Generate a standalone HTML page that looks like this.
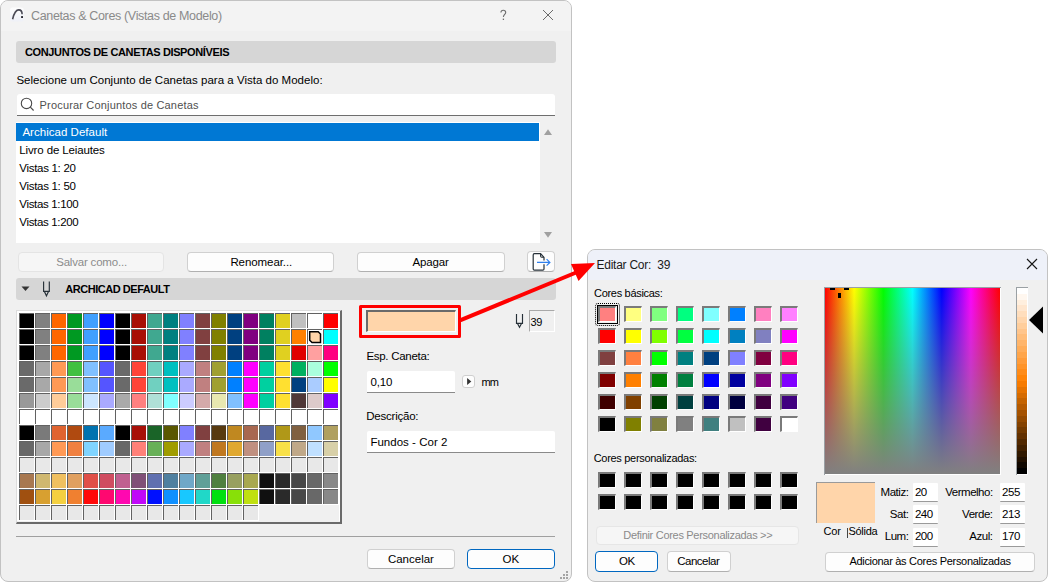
<!DOCTYPE html>
<html><head><meta charset="utf-8">
<style>
*{box-sizing:border-box;margin:0;padding:0}
html,body{width:1048px;height:582px;overflow:hidden;background:#fff}
body{position:relative;font-family:"Liberation Sans",sans-serif;font-size:12px;color:#000}
.a{position:absolute}
.t{position:absolute;white-space:pre}
.c{position:absolute;width:15px;height:15px;border-top:1px solid #626262;border-left:1px solid #626262}
.s{position:absolute;width:18px;height:16px;border-top:2px solid #7a7a7a;border-left:2px solid #7a7a7a;border-bottom:1px solid #fff;border-right:1px solid #fff}
</style></head><body>
<div class="a" style="left:0px;top:0px;width:572px;height:582px;background:#f0f0f0;border:1px solid #c2c2c2;border-radius:8px;"></div>
<div class="a" style="left:1px;top:1px;width:570px;height:30px;background:#f3f3f3;border-radius:7px 7px 0 0;"></div>
<svg class="a" style="left:0;top:0" width="40" height="30"><defs><linearGradient id="ig" x1="0" y1="0" x2="0" y2="1"><stop offset="0" stop-color="#fdfdfd"/><stop offset="1" stop-color="#eef0f7"/></linearGradient></defs><rect x="10" y="7.6" width="13.8" height="14" rx="2.5" fill="url(#ig)"/><path d="M12.6 19.2C13.6 15 15.8 9.9 18.8 9.9C20.9 9.9 22.1 11.6 22.1 14.3" fill="none" stroke="#4a4a55" stroke-width="1.6"/><rect x="21.1" y="16.1" width="1.9" height="1.9" fill="#2a2a30"/></svg>
<div class="t" style="left:31px;top:10.17px;font-size:12.5px;line-height:12.5px;font-weight:400;color:#8a8a8a;letter-spacing:-0.35px;">Canetas &amp; Cores (Vistas de Modelo)</div>
<svg class="a" style="left:0;top:0" width="580" height="30"><path d="M500.9 12.6C500.9 11 502 10.2 503.3 10.2C504.7 10.2 505.7 11.1 505.7 12.4C505.7 14.3 503.4 14.7 503.4 17" fill="none" stroke="#6f6f6f" stroke-width="1.1"/><rect x="502.75" y="18.6" width="1.3" height="1.4" fill="#6f6f6f"/></svg>
<svg class="a" style="left:542px;top:9px" width="12" height="12" viewBox="0 0 12 12"><path d="M1 1L11 11M11 1L1 11" stroke="#6a6a6a" stroke-width="1"/></svg>
<div class="a" style="left:16px;top:41px;width:540px;height:22px;background:#d6d6d6;border-radius:3px;"></div>
<div class="t" style="left:25px;top:46.56px;font-size:11px;line-height:11px;font-weight:700;color:#000;letter-spacing:-0.37px;">CONJUNTOS DE CANETAS DISPONÍVEIS</div>
<div class="t" style="left:16.4px;top:74.50px;font-size:11.5px;line-height:11.5px;font-weight:400;color:#000;letter-spacing:0.015px;">Selecione um Conjunto de Canetas para a Vista do Modelo:</div>
<div class="a" style="left:17px;top:94px;width:538px;height:22px;background:#fff;border-bottom:1px solid #6e6e6e;border-radius:3px 3px 0 0;"></div>
<svg class="a" style="left:0;top:90px" width="40" height="30"><circle cx="26.5" cy="13.4" r="5.2" fill="none" stroke="#4a4a4a" stroke-width="1.1"/><path d="M30.3 17.2L33.6 20.5" stroke="#4a4a4a" stroke-width="1.2"/></svg>
<div class="t" style="left:39.6px;top:99.76px;font-size:11px;line-height:11px;font-weight:400;color:#505050;letter-spacing:0.17px;">Procurar Conjuntos de Canetas</div>
<div class="a" style="left:16px;top:122px;width:524px;height:121px;background:#fff;"></div>
<div class="a" style="left:16px;top:123px;width:523px;height:18px;background:#0078d4;"></div>
<div class="t" style="left:22.4px;top:126.50px;font-size:11.5px;line-height:11.5px;font-weight:400;color:#fff;letter-spacing:0.03px;">Archicad Default</div>
<div class="t" style="left:19.3px;top:144.50px;font-size:11.5px;line-height:11.5px;font-weight:400;color:#000;letter-spacing:-0.13px;">Livro de Leiautes</div>
<div class="t" style="left:19.3px;top:162.50px;font-size:11.5px;line-height:11.5px;font-weight:400;color:#000;letter-spacing:-0.3px;">Vistas 1: 20</div>
<div class="t" style="left:19.3px;top:180.50px;font-size:11.5px;line-height:11.5px;font-weight:400;color:#000;letter-spacing:-0.3px;">Vistas 1: 50</div>
<div class="t" style="left:19.3px;top:198.50px;font-size:11.5px;line-height:11.5px;font-weight:400;color:#000;letter-spacing:-0.33px;">Vistas 1:100</div>
<div class="t" style="left:19.3px;top:216.50px;font-size:11.5px;line-height:11.5px;font-weight:400;color:#000;letter-spacing:-0.33px;">Vistas 1:200</div>
<svg class="a" style="left:544px;top:129px" width="8" height="6"><path d="M0 6L4 0.2L8 6Z" fill="#a0a0a0"/></svg>
<svg class="a" style="left:544px;top:232px" width="8" height="6"><path d="M0 0L8 0L4 5.8Z" fill="#a0a0a0"/></svg>
<div class="a" style="left:17.6px;top:252px;width:146.5px;height:20px;background:#f6f6f6;border:1px solid #e4e4e4;border-radius:4px;"></div>
<div class="t" style="left:56.2px;top:256.50px;font-size:11.5px;line-height:11.5px;font-weight:400;color:#8c8c8c;letter-spacing:-0.2px;">Salvar como...</div>
<div class="a" style="left:187.3px;top:252px;width:147.2px;height:20px;background:#fdfdfd;border:1px solid #d0d0d0;border-bottom-color:#b0b0b0;border-radius:4px;"></div>
<div class="t" style="left:230.4px;top:256.50px;font-size:11.5px;line-height:11.5px;font-weight:400;color:#000;letter-spacing:-0.08px;">Renomear...</div>
<div class="a" style="left:357px;top:252px;width:147.5px;height:20px;background:#fdfdfd;border:1px solid #d0d0d0;border-bottom-color:#b0b0b0;border-radius:4px;"></div>
<div class="t" style="left:412.4px;top:256.50px;font-size:11.5px;line-height:11.5px;font-weight:400;color:#000;letter-spacing:-0.12px;">Apagar</div>
<div class="a" style="left:527.4px;top:251.2px;width:27.2px;height:20.6px;background:#fdfdfd;border:1px solid #d0d0d0;border-bottom-color:#b0b0b0;border-radius:4px;"></div>
<svg class="a" style="left:0;top:0" width="1048" height="582"><path d="M544 260.6V257.3L540.6 253.7H534.4Q533.2 253.7 533.2 254.9V269Q533.2 270.1 534.4 270.1H542.8Q544 270.1 544 269V264.2" fill="none" stroke="#263038" stroke-width="1.2" stroke-linejoin="round"/><path d="M540.6 253.9V256.1Q540.6 257.2 541.7 257.2H543.9" fill="none" stroke="#263038" stroke-width="1.1"/><path d="M537 262.4H549.6M546.6 259.1L549.9 262.4L546.6 265.7" fill="none" stroke="#2f80ed" stroke-width="1.2"/></svg>
<div class="a" style="left:16px;top:278px;width:540px;height:22px;background:#d6d6d6;border-radius:3px;"></div>
<svg class="a" style="left:21px;top:286px" width="9" height="6"><path d="M0.5 0.5H8.5L4.5 5Z" fill="#333"/></svg>
<svg class="a" style="left:0;top:0" width="1048" height="582"><path d="M43.6 281.5V291.4H49.3V281.5M44.4 291.4L46.45 295.8L48.5 291.4" fill="none" stroke="#263038" stroke-width="1.15" stroke-linejoin="miter"/></svg>
<div class="t" style="left:65.3px;top:283.56px;font-size:11px;line-height:11px;font-weight:700;color:#000;letter-spacing:-0.47px;">ARCHICAD DEFAULT</div>
<div class="a" style="left:16px;top:310px;width:326px;height:214px;background:#f0f0f0;border-top:1px solid #dcdcdc;border-left:1px solid #dcdcdc;border-right:2px solid #6a6a6a;border-bottom:2px solid #6a6a6a;"></div>
<div class="a" style="left:17px;top:311px;width:323px;height:210px;background:#fff;"></div>
<div class="a" style="left:259px;top:505px;width:80px;height:16px;background:#f0f0f0;"></div>
<div class="c" style="left:19px;top:313px;background:#000000"></div><div class="c" style="left:35px;top:313px;background:#808080"></div><div class="c" style="left:51px;top:313px;background:#FF6600"></div><div class="c" style="left:67px;top:313px;background:#009922"></div><div class="c" style="left:83px;top:313px;background:#40A0FF"></div><div class="c" style="left:99px;top:313px;background:#0000FF"></div><div class="c" style="left:115px;top:313px;background:#000000"></div><div class="c" style="left:131px;top:313px;background:#A80E04"></div><div class="c" style="left:147px;top:313px;background:#40A890"></div><div class="c" style="left:163px;top:313px;background:#008080"></div><div class="c" style="left:179px;top:313px;background:#8080FF"></div><div class="c" style="left:195px;top:313px;background:#804040"></div><div class="c" style="left:211px;top:313px;background:#808000"></div><div class="c" style="left:227px;top:313px;background:#004080"></div><div class="c" style="left:243px;top:313px;background:#800080"></div><div class="c" style="left:259px;top:313px;background:#008060"></div><div class="c" style="left:275px;top:313px;background:#E0D020"></div><div class="c" style="left:291px;top:313px;background:#C0C0C0"></div><div class="c" style="left:307px;top:313px;background:#FFFFFF"></div><div class="c" style="left:323px;top:313px;background:#FF0000"></div><div class="c" style="left:19px;top:329px;background:#000000"></div><div class="c" style="left:35px;top:329px;background:#808080"></div><div class="c" style="left:51px;top:329px;background:#FF6600"></div><div class="c" style="left:67px;top:329px;background:#009922"></div><div class="c" style="left:83px;top:329px;background:#40A0FF"></div><div class="c" style="left:99px;top:329px;background:#0000FF"></div><div class="c" style="left:115px;top:329px;background:#000000"></div><div class="c" style="left:131px;top:329px;background:#A80E04"></div><div class="c" style="left:147px;top:329px;background:#40A890"></div><div class="c" style="left:163px;top:329px;background:#008080"></div><div class="c" style="left:179px;top:329px;background:#8080FF"></div><div class="c" style="left:195px;top:329px;background:#804040"></div><div class="c" style="left:211px;top:329px;background:#808000"></div><div class="c" style="left:227px;top:329px;background:#004080"></div><div class="c" style="left:243px;top:329px;background:#800080"></div><div class="c" style="left:259px;top:329px;background:#008060"></div><div class="c" style="left:275px;top:329px;background:#E0D020"></div><div class="c" style="left:291px;top:329px;background:#FF8000"></div><div class="c" style="left:307px;top:329px;background:#fff"></div><div class="c" style="left:323px;top:329px;background:#00FFFF"></div><div class="c" style="left:19px;top:345px;background:#000000"></div><div class="c" style="left:35px;top:345px;background:#808080"></div><div class="c" style="left:51px;top:345px;background:#FF6600"></div><div class="c" style="left:67px;top:345px;background:#009922"></div><div class="c" style="left:83px;top:345px;background:#40A0FF"></div><div class="c" style="left:99px;top:345px;background:#0000FF"></div><div class="c" style="left:115px;top:345px;background:#000000"></div><div class="c" style="left:131px;top:345px;background:#A80E04"></div><div class="c" style="left:147px;top:345px;background:#40A890"></div><div class="c" style="left:163px;top:345px;background:#008080"></div><div class="c" style="left:179px;top:345px;background:#8080FF"></div><div class="c" style="left:195px;top:345px;background:#804040"></div><div class="c" style="left:211px;top:345px;background:#808000"></div><div class="c" style="left:227px;top:345px;background:#004080"></div><div class="c" style="left:243px;top:345px;background:#800080"></div><div class="c" style="left:259px;top:345px;background:#008060"></div><div class="c" style="left:275px;top:345px;background:#E0D020"></div><div class="c" style="left:291px;top:345px;background:#E00000"></div><div class="c" style="left:307px;top:345px;background:#FFA0A0"></div><div class="c" style="left:323px;top:345px;background:#FF0080"></div><div class="c" style="left:19px;top:361px;background:#6A6A6A"></div><div class="c" style="left:35px;top:361px;background:#A8A8A8"></div><div class="c" style="left:51px;top:361px;background:#FF9955"></div><div class="c" style="left:67px;top:361px;background:#40C040"></div><div class="c" style="left:83px;top:361px;background:#80C0FF"></div><div class="c" style="left:99px;top:361px;background:#5555FF"></div><div class="c" style="left:115px;top:361px;background:#6A6A6A"></div><div class="c" style="left:131px;top:361px;background:#FF4438"></div><div class="c" style="left:147px;top:361px;background:#70D0C0"></div><div class="c" style="left:163px;top:361px;background:#00C0C0"></div><div class="c" style="left:179px;top:361px;background:#AAAAFF"></div><div class="c" style="left:195px;top:361px;background:#C08080"></div><div class="c" style="left:211px;top:361px;background:#A0A030"></div><div class="c" style="left:227px;top:361px;background:#0080FF"></div><div class="c" style="left:243px;top:361px;background:#FF00FF"></div><div class="c" style="left:259px;top:361px;background:#00D0A0"></div><div class="c" style="left:275px;top:361px;background:#FFE030"></div><div class="c" style="left:291px;top:361px;background:#00B060"></div><div class="c" style="left:307px;top:361px;background:#AAFFDD"></div><div class="c" style="left:323px;top:361px;background:#00FF00"></div><div class="c" style="left:19px;top:377px;background:#6A6A6A"></div><div class="c" style="left:35px;top:377px;background:#A8A8A8"></div><div class="c" style="left:51px;top:377px;background:#FF9955"></div><div class="c" style="left:67px;top:377px;background:#99DD99"></div><div class="c" style="left:83px;top:377px;background:#80C0FF"></div><div class="c" style="left:99px;top:377px;background:#5555FF"></div><div class="c" style="left:115px;top:377px;background:#6A6A6A"></div><div class="c" style="left:131px;top:377px;background:#FF4438"></div><div class="c" style="left:147px;top:377px;background:#70D0C0"></div><div class="c" style="left:163px;top:377px;background:#00C0C0"></div><div class="c" style="left:179px;top:377px;background:#AAAAFF"></div><div class="c" style="left:195px;top:377px;background:#C08080"></div><div class="c" style="left:211px;top:377px;background:#A0A030"></div><div class="c" style="left:227px;top:377px;background:#0080FF"></div><div class="c" style="left:243px;top:377px;background:#FF00FF"></div><div class="c" style="left:259px;top:377px;background:#00D0A0"></div><div class="c" style="left:275px;top:377px;background:#FFE030"></div><div class="c" style="left:291px;top:377px;background:#004080"></div><div class="c" style="left:307px;top:377px;background:#AACCFF"></div><div class="c" style="left:323px;top:377px;background:#FFFF00"></div><div class="c" style="left:19px;top:393px;background:#999999"></div><div class="c" style="left:35px;top:393px;background:#CCCCCC"></div><div class="c" style="left:51px;top:393px;background:#FFCC99"></div><div class="c" style="left:67px;top:393px;background:#99DD99"></div><div class="c" style="left:83px;top:393px;background:#CCE6FF"></div><div class="c" style="left:99px;top:393px;background:#AAAAFF"></div><div class="c" style="left:115px;top:393px;background:#AAAAAA"></div><div class="c" style="left:131px;top:393px;background:#FF8080"></div><div class="c" style="left:147px;top:393px;background:#B0E0D8"></div><div class="c" style="left:163px;top:393px;background:#80FFFF"></div><div class="c" style="left:179px;top:393px;background:#CCCCFF"></div><div class="c" style="left:195px;top:393px;background:#D4AAAA"></div><div class="c" style="left:211px;top:393px;background:#E8E8B0"></div><div class="c" style="left:227px;top:393px;background:#80C0FF"></div><div class="c" style="left:243px;top:393px;background:#FF00FF"></div><div class="c" style="left:259px;top:393px;background:#00D0A0"></div><div class="c" style="left:275px;top:393px;background:#FFE030"></div><div class="c" style="left:291px;top:393px;background:#503838"></div><div class="c" style="left:307px;top:393px;background:#DCCACA"></div><div class="c" style="left:323px;top:393px;background:#8000FF"></div><div class="c" style="left:19px;top:409px;background:#FFFFFF"></div><div class="c" style="left:35px;top:409px;background:#FFFFFF"></div><div class="c" style="left:51px;top:409px;background:#FFFFFF"></div><div class="c" style="left:67px;top:409px;background:#FFFFFF"></div><div class="c" style="left:83px;top:409px;background:#FFFFFF"></div><div class="c" style="left:99px;top:409px;background:#FFFFFF"></div><div class="c" style="left:115px;top:409px;background:#FFFFFF"></div><div class="c" style="left:131px;top:409px;background:#FFFFFF"></div><div class="c" style="left:147px;top:409px;background:#FFFFFF"></div><div class="c" style="left:163px;top:409px;background:#FFFFFF"></div><div class="c" style="left:179px;top:409px;background:#FFFFFF"></div><div class="c" style="left:195px;top:409px;background:#FFFFFF"></div><div class="c" style="left:211px;top:409px;background:#FFFFFF"></div><div class="c" style="left:227px;top:409px;background:#FFFFFF"></div><div class="c" style="left:243px;top:409px;background:#FFFFFF"></div><div class="c" style="left:259px;top:409px;background:#FFFFFF"></div><div class="c" style="left:275px;top:409px;background:#FFFFFF"></div><div class="c" style="left:291px;top:409px;background:#FFFFFF"></div><div class="c" style="left:307px;top:409px;background:#FFFFFF"></div><div class="c" style="left:323px;top:409px;background:#FFFFFF"></div><div class="c" style="left:19px;top:425px;background:#000000"></div><div class="c" style="left:35px;top:425px;background:#7A7A7A"></div><div class="c" style="left:51px;top:425px;background:#E06430"></div><div class="c" style="left:67px;top:425px;background:#B04A10"></div><div class="c" style="left:83px;top:425px;background:#0073B0"></div><div class="c" style="left:99px;top:425px;background:#5AAAFF"></div><div class="c" style="left:115px;top:425px;background:#000000"></div><div class="c" style="left:131px;top:425px;background:#A81008"></div><div class="c" style="left:147px;top:425px;background:#1A6428"></div><div class="c" style="left:163px;top:425px;background:#5A5800"></div><div class="c" style="left:179px;top:425px;background:#8080FF"></div><div class="c" style="left:195px;top:425px;background:#804040"></div><div class="c" style="left:211px;top:425px;background:#583A10"></div><div class="c" style="left:227px;top:425px;background:#C08820"></div><div class="c" style="left:243px;top:425px;background:#A86850"></div><div class="c" style="left:259px;top:425px;background:#5868A0"></div><div class="c" style="left:275px;top:425px;background:#B09818"></div><div class="c" style="left:291px;top:425px;background:#806040"></div><div class="c" style="left:307px;top:425px;background:#90C8FF"></div><div class="c" style="left:323px;top:425px;background:#B0A060"></div><div class="c" style="left:19px;top:441px;background:#686868"></div><div class="c" style="left:35px;top:441px;background:#A8A8A8"></div><div class="c" style="left:51px;top:441px;background:#FF9955"></div><div class="c" style="left:67px;top:441px;background:#F08040"></div><div class="c" style="left:83px;top:441px;background:#80D4FF"></div><div class="c" style="left:99px;top:441px;background:#A0CCFF"></div><div class="c" style="left:115px;top:441px;background:#686868"></div><div class="c" style="left:131px;top:441px;background:#FF8078"></div><div class="c" style="left:147px;top:441px;background:#68B058"></div><div class="c" style="left:163px;top:441px;background:#A09C00"></div><div class="c" style="left:179px;top:441px;background:#AAAAFF"></div><div class="c" style="left:195px;top:441px;background:#C08080"></div><div class="c" style="left:211px;top:441px;background:#C07820"></div><div class="c" style="left:227px;top:441px;background:#E0A830"></div><div class="c" style="left:243px;top:441px;background:#C09080"></div><div class="c" style="left:259px;top:441px;background:#90A0C8"></div><div class="c" style="left:275px;top:441px;background:#F8E048"></div><div class="c" style="left:291px;top:441px;background:#C0A888"></div><div class="c" style="left:307px;top:441px;background:#C0E0FF"></div><div class="c" style="left:323px;top:441px;background:#D8D0A8"></div><div class="c" style="left:19px;top:457px;background:#E8E8E8"></div><div class="c" style="left:35px;top:457px;background:#E8E8E8"></div><div class="c" style="left:51px;top:457px;background:#E8E8E8"></div><div class="c" style="left:67px;top:457px;background:#E8E8E8"></div><div class="c" style="left:83px;top:457px;background:#E8E8E8"></div><div class="c" style="left:99px;top:457px;background:#E8E8E8"></div><div class="c" style="left:115px;top:457px;background:#E8E8E8"></div><div class="c" style="left:131px;top:457px;background:#E8E8E8"></div><div class="c" style="left:147px;top:457px;background:#E8E8E8"></div><div class="c" style="left:163px;top:457px;background:#E8E8E8"></div><div class="c" style="left:179px;top:457px;background:#E8E8E8"></div><div class="c" style="left:195px;top:457px;background:#E8E8E8"></div><div class="c" style="left:211px;top:457px;background:#E8E8E8"></div><div class="c" style="left:227px;top:457px;background:#E8E8E8"></div><div class="c" style="left:243px;top:457px;background:#E8E8E8"></div><div class="c" style="left:259px;top:457px;background:#E8E8E8"></div><div class="c" style="left:275px;top:457px;background:#E8E8E8"></div><div class="c" style="left:291px;top:457px;background:#E8E8E8"></div><div class="c" style="left:307px;top:457px;background:#E8E8E8"></div><div class="c" style="left:323px;top:457px;background:#E8E8E8"></div><div class="c" style="left:19px;top:473px;background:#A87850"></div><div class="c" style="left:35px;top:473px;background:#D0B870"></div><div class="c" style="left:51px;top:473px;background:#F0C060"></div><div class="c" style="left:67px;top:473px;background:#E0A060"></div><div class="c" style="left:83px;top:473px;background:#E05048"></div><div class="c" style="left:99px;top:473px;background:#D04C60"></div><div class="c" style="left:115px;top:473px;background:#C06090"></div><div class="c" style="left:131px;top:473px;background:#805078"></div><div class="c" style="left:147px;top:473px;background:#6070B0"></div><div class="c" style="left:163px;top:473px;background:#5080A0"></div><div class="c" style="left:179px;top:473px;background:#70A8C8"></div><div class="c" style="left:195px;top:473px;background:#60A098"></div><div class="c" style="left:211px;top:473px;background:#508040"></div><div class="c" style="left:227px;top:473px;background:#98A060"></div><div class="c" style="left:243px;top:473px;background:#A8A850"></div><div class="c" style="left:259px;top:473px;background:#101010"></div><div class="c" style="left:275px;top:473px;background:#2A2A2A"></div><div class="c" style="left:291px;top:473px;background:#484848"></div><div class="c" style="left:307px;top:473px;background:#686868"></div><div class="c" style="left:323px;top:473px;background:#888888"></div><div class="c" style="left:19px;top:489px;background:#A05010"></div><div class="c" style="left:35px;top:489px;background:#D8A030"></div><div class="c" style="left:51px;top:489px;background:#F4D040"></div><div class="c" style="left:67px;top:489px;background:#F08030"></div><div class="c" style="left:83px;top:489px;background:#FF0808"></div><div class="c" style="left:99px;top:489px;background:#FF0870"></div><div class="c" style="left:115px;top:489px;background:#FF08B0"></div><div class="c" style="left:131px;top:489px;background:#C008F8"></div><div class="c" style="left:147px;top:489px;background:#0010FF"></div><div class="c" style="left:163px;top:489px;background:#1090FF"></div><div class="c" style="left:179px;top:489px;background:#18C8FF"></div><div class="c" style="left:195px;top:489px;background:#20D8C8"></div><div class="c" style="left:211px;top:489px;background:#00E010"></div><div class="c" style="left:227px;top:489px;background:#88E008"></div><div class="c" style="left:243px;top:489px;background:#C0E010"></div><div class="c" style="left:259px;top:489px;background:#101010"></div><div class="c" style="left:275px;top:489px;background:#2A2A2A"></div><div class="c" style="left:291px;top:489px;background:#484848"></div><div class="c" style="left:307px;top:489px;background:#686868"></div><div class="c" style="left:323px;top:489px;background:#888888"></div><div class="c" style="left:19px;top:505px;background:#E8E8E8"></div><div class="c" style="left:35px;top:505px;background:#E8E8E8"></div><div class="c" style="left:51px;top:505px;background:#E8E8E8"></div><div class="c" style="left:67px;top:505px;background:#E8E8E8"></div><div class="c" style="left:83px;top:505px;background:#E8E8E8"></div><div class="c" style="left:99px;top:505px;background:#E8E8E8"></div><div class="c" style="left:115px;top:505px;background:#E8E8E8"></div><div class="c" style="left:131px;top:505px;background:#E8E8E8"></div><div class="c" style="left:147px;top:505px;background:#E8E8E8"></div><div class="c" style="left:163px;top:505px;background:#E8E8E8"></div><div class="c" style="left:179px;top:505px;background:#E8E8E8"></div><div class="c" style="left:195px;top:505px;background:#E8E8E8"></div><div class="c" style="left:211px;top:505px;background:#E8E8E8"></div><div class="c" style="left:227px;top:505px;background:#E8E8E8"></div><div class="c" style="left:243px;top:505px;background:#E8E8E8"></div>
<svg class="a" style="left:307px;top:329px" width="16" height="16" viewBox="0 0 16 16"><path d="M2.7 2.7H11.2L13.5 5V13.5H5L2.7 11.2Z" fill="#FFD5AA" stroke="#000" stroke-width="1.5" stroke-linejoin="miter"/></svg>
<div class="a" style="left:366px;top:310px;width:90px;height:22px;background:#FFD5AA;border-top:2px solid #6a6a6a;border-left:2px solid #6a6a6a;border-bottom:1px solid #fff;border-right:1px solid #fff;"></div>
<div class="a" style="left:359.3px;top:304.5px;width:102.1px;height:33px;border:3.4px solid #ff0000;border-radius:1.5px;"></div>
<svg class="a" style="left:0;top:0" width="1048" height="582"><path d="M516.5 314V323.4H522.5V314M517.5 323.4L519.5 327.2L521.5 323.4" fill="none" stroke="#263038" stroke-width="1.15" stroke-linejoin="miter"/></svg>
<div class="a" style="left:529px;top:310px;width:26.3px;height:22.3px;background:#f0f0f0;border-top:1px solid #a8a8a8;border-left:1px solid #a8a8a8;border-bottom:1px solid #fff;border-right:1px solid #fff;"></div>
<div class="t" style="left:530.4px;top:316.76px;font-size:11px;line-height:11px;font-weight:400;color:#000;letter-spacing:-0.2px;">39</div>
<div class="t" style="left:366.4px;top:351.20px;font-size:11.5px;line-height:11.5px;font-weight:400;color:#000;letter-spacing:-0.28px;">Esp. Caneta:</div>
<div class="a" style="left:366.9px;top:370.8px;width:88.4px;height:22px;background:#fff;border-bottom:1px solid #8a8a8a;border-radius:2px 2px 0 0;"></div>
<div class="t" style="left:370.4px;top:376.80px;font-size:11.5px;line-height:11.5px;font-weight:400;color:#000;letter-spacing:-0.1px;">0,10</div>
<div class="a" style="left:462.4px;top:375.2px;width:12.2px;height:12.4px;background:#fdfdfd;border:1px solid #cfcfcf;border-radius:3px;"></div>
<svg class="a" style="left:0;top:0" width="500" height="400"><path d="M467.1 378L471.3 381.55L467.1 385.1Z" fill="#333"/></svg>
<div class="t" style="left:481.6px;top:377.16px;font-size:11px;line-height:11px;font-weight:400;color:#000;letter-spacing:-0.9px;">mm</div>
<div class="t" style="left:366.3px;top:411.20px;font-size:11.5px;line-height:11.5px;font-weight:400;color:#000;letter-spacing:-0.23px;">Descrição:</div>
<div class="a" style="left:366.9px;top:430.8px;width:188.1px;height:22px;background:#fff;border-bottom:1px solid #8a8a8a;border-radius:2px 2px 0 0;"></div>
<div class="t" style="left:370.4px;top:436.50px;font-size:11.5px;line-height:11.5px;font-weight:400;color:#000;letter-spacing:0.02px;">Fundos - Cor 2</div>
<div class="a" style="left:16px;top:536px;width:539px;height:1px;background:#a0a0a0;"></div>
<div class="a" style="left:367.3px;top:549.2px;width:87.3px;height:20.3px;background:#fdfdfd;border:1px solid #d0d0d0;border-bottom-color:#b0b0b0;border-radius:4px;"></div>
<div class="t" style="left:367.3px;top:554.00px;width:87.30000000000001px;text-align:center;font-size:11.5px;line-height:11.5px;font-weight:400;color:#000;letter-spacing:0px;">Cancelar</div>
<div class="a" style="left:467px;top:549.2px;width:87.8px;height:20.3px;background:#fdfdfd;border:1px solid #0067c0;border-radius:4px;"></div>
<div class="t" style="left:467px;top:554.00px;width:87.79999999999995px;text-align:center;font-size:11.5px;line-height:11.5px;font-weight:400;color:#000;letter-spacing:0px;">OK</div>
<svg class="a" style="left:0;top:0" width="1048" height="582"><g fill="#a4a4a4"><rect x="566" y="571" width="2" height="2"/><rect x="563" y="574" width="2" height="2"/><rect x="566" y="574" width="2" height="2"/><rect x="560" y="577" width="2" height="2"/><rect x="563" y="577" width="2" height="2"/><rect x="566" y="577" width="2" height="2"/></g></svg>
<div class="a" style="left:587px;top:249px;width:461px;height:333px;background:#f0f0f0;border:1px solid #c2c2c2;border-radius:8px;"></div>
<div class="a" style="left:588px;top:250px;width:459px;height:30px;background:#eef1f9;border-radius:7px 7px 0 0;"></div>
<div class="t" style="left:596.5px;top:259.23px;font-size:12px;line-height:12px;font-weight:400;color:#1a1a1a;letter-spacing:-0.25px;">Editar Cor:  39</div>
<svg class="a" style="left:1026px;top:258px" width="12" height="12" viewBox="0 0 12 12"><path d="M1 1L11 11M11 1L1 11" stroke="#151515" stroke-width="1.1"/></svg>
<div class="t" style="left:594px;top:287.96px;font-size:11px;line-height:11px;font-weight:400;color:#000;letter-spacing:-0.3px;">Cores básicas:</div>
<div class="s" style="left:598px;top:306px;background:#FF8080"></div><div class="s" style="left:624px;top:306px;background:#FFFF80"></div><div class="s" style="left:650px;top:306px;background:#80FF80"></div><div class="s" style="left:676px;top:306px;background:#00FF80"></div><div class="s" style="left:702px;top:306px;background:#80FFFF"></div><div class="s" style="left:728px;top:306px;background:#0080FF"></div><div class="s" style="left:754px;top:306px;background:#FF80C0"></div><div class="s" style="left:780px;top:306px;background:#FF80FF"></div><div class="s" style="left:598px;top:328px;background:#FF0000"></div><div class="s" style="left:624px;top:328px;background:#FFFF00"></div><div class="s" style="left:650px;top:328px;background:#80FF00"></div><div class="s" style="left:676px;top:328px;background:#00FF40"></div><div class="s" style="left:702px;top:328px;background:#00FFFF"></div><div class="s" style="left:728px;top:328px;background:#0080C0"></div><div class="s" style="left:754px;top:328px;background:#8080C0"></div><div class="s" style="left:780px;top:328px;background:#FF00FF"></div><div class="s" style="left:598px;top:350px;background:#804040"></div><div class="s" style="left:624px;top:350px;background:#FF8040"></div><div class="s" style="left:650px;top:350px;background:#00FF00"></div><div class="s" style="left:676px;top:350px;background:#008080"></div><div class="s" style="left:702px;top:350px;background:#004080"></div><div class="s" style="left:728px;top:350px;background:#8080FF"></div><div class="s" style="left:754px;top:350px;background:#800040"></div><div class="s" style="left:780px;top:350px;background:#FF0080"></div><div class="s" style="left:598px;top:372px;background:#800000"></div><div class="s" style="left:624px;top:372px;background:#FF8000"></div><div class="s" style="left:650px;top:372px;background:#008000"></div><div class="s" style="left:676px;top:372px;background:#008040"></div><div class="s" style="left:702px;top:372px;background:#0000FF"></div><div class="s" style="left:728px;top:372px;background:#0000A0"></div><div class="s" style="left:754px;top:372px;background:#800080"></div><div class="s" style="left:780px;top:372px;background:#8000FF"></div><div class="s" style="left:598px;top:394px;background:#400000"></div><div class="s" style="left:624px;top:394px;background:#804000"></div><div class="s" style="left:650px;top:394px;background:#004000"></div><div class="s" style="left:676px;top:394px;background:#004040"></div><div class="s" style="left:702px;top:394px;background:#000080"></div><div class="s" style="left:728px;top:394px;background:#000040"></div><div class="s" style="left:754px;top:394px;background:#400040"></div><div class="s" style="left:780px;top:394px;background:#400080"></div><div class="s" style="left:598px;top:416px;background:#000000"></div><div class="s" style="left:624px;top:416px;background:#808000"></div><div class="s" style="left:650px;top:416px;background:#808040"></div><div class="s" style="left:676px;top:416px;background:#808080"></div><div class="s" style="left:702px;top:416px;background:#408080"></div><div class="s" style="left:728px;top:416px;background:#C0C0C0"></div><div class="s" style="left:754px;top:416px;background:#400040"></div><div class="s" style="left:780px;top:416px;background:#FFFFFF"></div><div class="s" style="left:598px;top:472px;background:#000"></div><div class="s" style="left:624px;top:472px;background:#000"></div><div class="s" style="left:650px;top:472px;background:#000"></div><div class="s" style="left:676px;top:472px;background:#000"></div><div class="s" style="left:702px;top:472px;background:#000"></div><div class="s" style="left:728px;top:472px;background:#000"></div><div class="s" style="left:754px;top:472px;background:#000"></div><div class="s" style="left:780px;top:472px;background:#000"></div><div class="s" style="left:598px;top:494px;background:#000"></div><div class="s" style="left:624px;top:494px;background:#000"></div><div class="s" style="left:650px;top:494px;background:#000"></div><div class="s" style="left:676px;top:494px;background:#000"></div><div class="s" style="left:702px;top:494px;background:#000"></div><div class="s" style="left:728px;top:494px;background:#000"></div><div class="s" style="left:754px;top:494px;background:#000"></div><div class="s" style="left:780px;top:494px;background:#000"></div>
<div class="a" style="left:597px;top:305px;width:21px;height:18.6px;border:1.7px solid #000;"></div>
<div class="a" style="left:595px;top:303px;width:25.2px;height:23px;border:1px dotted #000;border-radius:3px;"></div>
<div class="t" style="left:593.7px;top:452.96px;font-size:11px;line-height:11px;font-weight:400;color:#000;letter-spacing:-0.3px;">Cores personalizadas:</div>
<div class="a" style="left:595.8px;top:525.5px;width:203.2px;height:19.5px;background:#f6f6f6;border:1px solid #e6e6e6;border-radius:4px;"></div>
<div class="t" style="left:623.3px;top:529.96px;font-size:11px;line-height:11px;font-weight:400;color:#8a8a8a;letter-spacing:-0.3px;">Definir Cores Personalizadas &gt;&gt;</div>
<div class="a" style="left:595.3px;top:551.3px;width:63px;height:20.4px;background:#fdfdfd;border:1px solid #0067c0;border-radius:4px;"></div>
<div class="t" style="left:619px;top:555.50px;font-size:11.5px;line-height:11.5px;font-weight:400;color:#000;letter-spacing:-0.5px;">OK</div>
<div class="a" style="left:667.3px;top:551.3px;width:63.4px;height:20.4px;background:#fdfdfd;border:1px solid #d0d0d0;border-bottom-color:#b0b0b0;border-radius:4px;"></div>
<div class="t" style="left:677.2px;top:555.50px;font-size:11.5px;line-height:11.5px;font-weight:400;color:#000;letter-spacing:-0.5px;">Cancelar</div>
<div class="a" style="left:824px;top:287px;width:177px;height:188px;background:#fff;border-top:1px solid #9aa0a4;border-left:1px solid #9aa0a4;"></div>
<div class="a" style="left:825px;top:288px;width:175px;height:186px;background:linear-gradient(to bottom, rgba(128,128,128,0), #808080),linear-gradient(to right,#f00 0%,#ff0 16.67%,#0f0 33.33%,#0ff 50%,#00f 66.67%,#f0f 83.33%,#f00 100%);"></div>
<div class="a" style="left:830px;top:288px;width:5px;height:2px;background:#000;"></div>
<div class="a" style="left:844px;top:288px;width:5px;height:2px;background:#000;"></div>
<div class="a" style="left:838px;top:293px;width:3px;height:5px;background:#000;"></div>
<div class="a" style="left:1016px;top:287px;width:12px;height:188px;background:#fff;border-top:1px solid #9aa0a4;border-left:1px solid #9aa0a4;"></div>
<div class="a" style="left:1017px;top:288px;width:10px;height:186px;background:linear-gradient(to bottom,#ffffff 0.0px,#ffffff 5.8px,#fff7ef 5.8px,#fff7ef 11.6px,#ffefde 11.6px,#ffefde 17.4px,#ffe6ce 17.4px,#ffe6ce 23.2px,#ffdebd 23.2px,#ffdebd 29.1px,#ffd6ad 29.1px,#ffd6ad 34.9px,#ffce9c 34.9px,#ffce9c 40.7px,#ffc58c 40.7px,#ffc58c 46.5px,#ffbd7b 46.5px,#ffbd7b 52.3px,#ffb56b 52.3px,#ffb56b 58.1px,#ffad5a 58.1px,#ffad5a 63.9px,#ffa54a 63.9px,#ffa54a 69.8px,#ff9c3a 69.8px,#ff9c3a 75.6px,#ff9429 75.6px,#ff9429 81.4px,#ff8c19 81.4px,#ff8c19 87.2px,#ff8408 87.2px,#ff8408 93.0px,#f77b00 93.0px,#f77b00 98.8px,#e67300 98.8px,#e67300 104.6px,#d66b00 104.6px,#d66b00 110.4px,#c56300 110.4px,#c56300 116.2px,#b55a00 116.2px,#b55a00 122.1px,#a55200 122.1px,#a55200 127.9px,#944a00 127.9px,#944a00 133.7px,#844200 133.7px,#844200 139.5px,#733a00 139.5px,#733a00 145.3px,#633100 145.3px,#633100 151.1px,#522900 151.1px,#522900 156.9px,#422100 156.9px,#422100 162.8px,#311900 162.8px,#311900 168.6px,#211000 168.6px,#211000 174.4px,#100800 174.4px,#100800 180.2px,#000000 180.2px,#000000 186.0px);"></div>
<svg class="a" style="left:1028px;top:305px" width="16" height="30"><path d="M1 15L15 1.5V28.5Z" fill="#000"/></svg>
<div class="a" style="left:816.2px;top:482px;width:59px;height:41px;background:#FFD5AA;border-top:1px solid #9a9a9a;border-left:1px solid #9a9a9a;"></div>
<div class="t" style="left:823.5px;top:526.26px;font-size:11px;line-height:11px;font-weight:400;color:#000;letter-spacing:-0.2px;">Cor</div>
<div class="a" style="left:846.5px;top:527.5px;width:1px;height:10px;background:#444;"></div>
<div class="t" style="left:848.5px;top:526.26px;font-size:11px;line-height:11px;font-weight:400;color:#000;letter-spacing:-0.3px;">Sólida</div>
<div class="t" style="right:139.5px;top:486.50px;font-size:11.5px;line-height:11.5px;font-weight:400;color:#000;letter-spacing:-0.45px;">Matiz:</div>
<div class="t" style="right:139.5px;top:508.80px;font-size:11.5px;line-height:11.5px;font-weight:400;color:#000;letter-spacing:-0.45px;">Sat:</div>
<div class="t" style="right:139.5px;top:531.30px;font-size:11.5px;line-height:11.5px;font-weight:400;color:#000;letter-spacing:-0.45px;">Lum:</div>
<div class="a" style="left:912.9px;top:483px;width:25px;height:19px;background:#fff;border-bottom:1px solid #9a9a9a;border-radius:1px;"></div>
<div class="t" style="left:914.9px;top:486.70px;font-size:11.5px;line-height:11.5px;font-weight:400;color:#000;letter-spacing:-0.45px;">20</div>
<div class="a" style="left:912.9px;top:505.2px;width:25px;height:19px;background:#fff;border-bottom:1px solid #9a9a9a;border-radius:1px;"></div>
<div class="t" style="left:914.9px;top:508.90px;font-size:11.5px;line-height:11.5px;font-weight:400;color:#000;letter-spacing:-0.45px;">240</div>
<div class="a" style="left:912.9px;top:527.7px;width:25px;height:19px;background:#fff;border-bottom:1px solid #9a9a9a;border-radius:1px;"></div>
<div class="t" style="left:914.9px;top:531.40px;font-size:11.5px;line-height:11.5px;font-weight:400;color:#000;letter-spacing:-0.45px;">200</div>
<div class="t" style="right:55.39999999999998px;top:486.50px;font-size:11.5px;line-height:11.5px;font-weight:400;color:#000;letter-spacing:-0.5px;">Vermelho:</div>
<div class="t" style="right:55.39999999999998px;top:508.80px;font-size:11.5px;line-height:11.5px;font-weight:400;color:#000;letter-spacing:-0.45px;">Verde:</div>
<div class="t" style="right:55.39999999999998px;top:531.30px;font-size:11.5px;line-height:11.5px;font-weight:400;color:#000;letter-spacing:-0.45px;">Azul:</div>
<div class="a" style="left:1000px;top:483px;width:25px;height:19px;background:#fff;border-bottom:1px solid #9a9a9a;border-radius:1px;"></div>
<div class="t" style="left:1002px;top:486.70px;font-size:11.5px;line-height:11.5px;font-weight:400;color:#000;letter-spacing:-0.45px;">255</div>
<div class="a" style="left:1000px;top:505.2px;width:25px;height:19px;background:#fff;border-bottom:1px solid #9a9a9a;border-radius:1px;"></div>
<div class="t" style="left:1002px;top:508.90px;font-size:11.5px;line-height:11.5px;font-weight:400;color:#000;letter-spacing:-0.45px;">213</div>
<div class="a" style="left:1000px;top:527.7px;width:25px;height:19px;background:#fff;border-bottom:1px solid #9a9a9a;border-radius:1px;"></div>
<div class="t" style="left:1002px;top:531.40px;font-size:11.5px;line-height:11.5px;font-weight:400;color:#000;letter-spacing:-0.45px;">170</div>
<div class="a" style="left:825.4px;top:551.7px;width:209.9px;height:20px;background:#fdfdfd;border:1px solid #d0d0d0;border-bottom-color:#b0b0b0;border-radius:4px;"></div>
<div class="t" style="left:849.4px;top:556.06px;font-size:11px;line-height:11px;font-weight:400;color:#000;letter-spacing:-0.3px;">Adicionar às Cores Personalizadas</div>
<svg class="a" style="left:0;top:0" width="1048" height="582"><path d="M460 320.4L581 270.5" stroke="#ff0000" stroke-width="4" fill="none"/><path d="M595 263L571 264L578.5 281Z" fill="#ff0000"/></svg>
</body></html>
